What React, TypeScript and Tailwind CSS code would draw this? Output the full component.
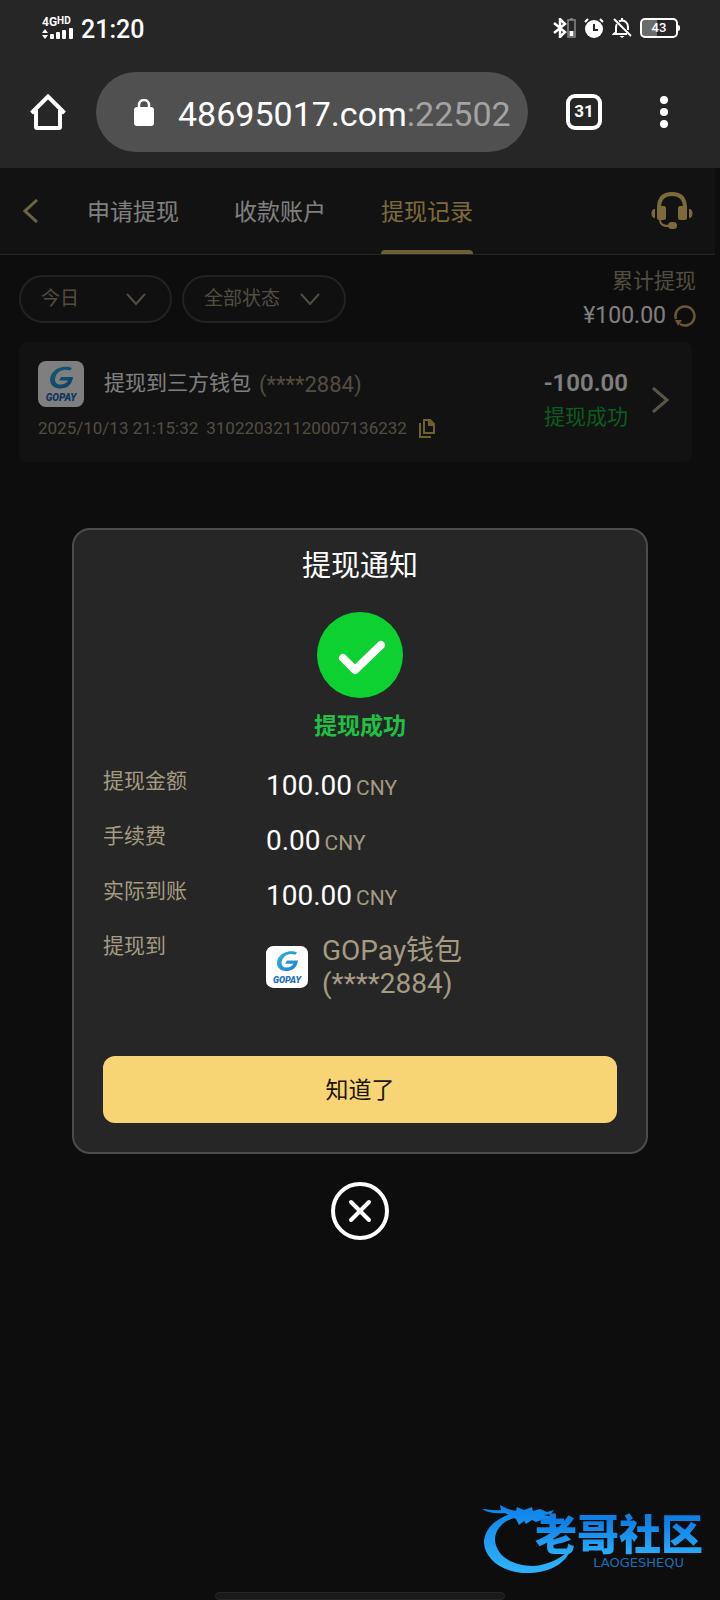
import React, { useState } from 'react';
import clsx from 'clsx';

interface DetailRow {
    label: string;
    amount: string;
    currency: string;
}

const tabs = ['申请提现', '收款账户', '提现记录'];

const detailRows: DetailRow[] = [
    { label: '提现金额', amount: '100.00', currency: 'CNY' },
    { label: '手续费', amount: '0.00', currency: 'CNY' },
    { label: '实际到账', amount: '100.00', currency: 'CNY' },
];

const GoPayLogo = ({ className }: { className?: string }) => (
    <svg viewBox="0 0 46 46" className={className} role="img" aria-label="GOPAY">
        <defs>
            <linearGradient id="gopay" x1="0" y1="0" x2="1" y2="1">
                <stop offset="0" stopColor="#2fb4e6" />
                <stop offset="1" stopColor="#1f7fd0" />
            </linearGradient>
        </defs>
        <rect width="46" height="46" rx="8" fill="#fff" />
        <path
            d="M34 7C28 4 18 6 13.500 13C10 20 13 27 21 27.500C29 28 34 24 35 16H23L21 19.500H30C28.500 22.500 25 24 21.500 23.500C17 23 16 19 18 14.500C20.500 9.500 27 7.500 32 9.500Z"
            fill="url(#gopay)"
        />
        <text
            x="23"
            y="40"
            textAnchor="middle"
            className="fill-[#1f6fc0] font-[Roboto,sans-serif] text-[10px] font-black italic"
        >
            GOPAY
        </text>
    </svg>
);

const StatusBar = () => (
    <div className="flex h-14 items-center justify-between pr-10 pl-[42px] text-white">
        <div className="flex items-center gap-2">
            <div className="flex flex-col gap-px">
                <p className="flex items-start text-[12px] leading-[10px] font-bold">
                    4G<span className="text-[10px] leading-[7px]">HD</span>
                </p>
                <svg width="31" height="12" viewBox="0 0 31 12" fill="currentColor">
                    <path d="M0 5L3 1L6 5ZM0 7L3 11L6 7Z" />
                    <rect x="8" y="6" width="4" height="5" rx="1" />
                    <rect x="14" y="4" width="4" height="7" rx="1" />
                    <rect x="20" y="2" width="4" height="9" rx="1" />
                    <rect x="27" y="0" width="4" height="11" rx="1" />
                </svg>
            </div>
            <time className="pt-[3px] text-[25px] leading-8 font-medium">21:20</time>
        </div>
        <div className="flex items-center gap-2">
            <svg width="23" height="20" viewBox="0 0 23 20" fill="none">
                <path d="M1 5L12 14L7 19V1L12 6L1 15" stroke="#fff" strokeWidth="2.5" />
                <path d="M15 2H22V19H15ZM17 1H20" stroke="#8a8a8a" strokeWidth="1.5" />
                <rect x="16.5" y="13" width="4" height="5" fill="#fff" />
            </svg>
            <svg width="20" height="20" viewBox="0 0 20 20" fill="none">
                <circle cx="10" cy="11" r="9" fill="#fff" />
                <path d="M1 4L4 1M16 1L19 4" stroke="#fff" strokeWidth="2" />
                <path d="M10 6V12H14" stroke="#262626" strokeWidth="2" />
            </svg>
            <svg width="20" height="20" viewBox="0 0 20 20" fill="none" stroke="#fff" strokeWidth="2">
                <path d="M5 6C4.300 7 4 8 4 9.500V14L2 16H15M7 3.500C8 3 9 2.500 10 2.500C13.500 2.500 16 5.500 16 9V12M10 0V3" />
                <path d="M2 1L19 18" />
                <path d="M7.500 18H12.500L10 20Z" fill="#fff" stroke="none" />
            </svg>
            <div className="flex items-center">
                <div className="flex h-5 w-[38px] items-center justify-center rounded-[5px] border-2 border-white bg-linear-to-r from-[#6b6b6b] from-43% to-transparent to-43% text-[13px] font-medium">
                    43
                </div>
                <div className="h-[6px] w-[2px] rounded-r bg-white" />
            </div>
        </div>
    </div>
);

const BrowserBar = () => (
    <div className="flex items-center px-[30px] pt-4 pb-4 text-white">
        <button aria-label="主页">
            <svg width="36" height="36" viewBox="0 0 36 36" fill="none" stroke="currentColor" strokeWidth="4">
                <path d="M1.500 19L18 2.500L34.500 19" />
                <path d="M6 16V33Q6 34 7 34H29Q30 34 30 33V16" />
            </svg>
        </button>
        <div className="mr-[38px] ml-[30px] flex h-20 min-w-0 flex-1 items-center rounded-full bg-[#505050] pl-[38px]">
            <svg width="20" height="27" viewBox="0 0 20 27" className="shrink-0">
                <rect y="8" width="20" height="19" rx="3" fill="#fff" />
                <path d="M5 9V6A5 5 0 0 1 15 6V9" fill="none" stroke="#fff" strokeWidth="2.5" />
            </svg>
            <p className="ml-6 pt-1 text-[34px] leading-10 whitespace-nowrap">
                48695017.com<span className="text-[#a3a3a3]">:22502</span>
            </p>
        </div>
        <button className="flex size-9 items-center justify-center rounded-[9px] border-4 border-white text-[17px] font-bold">
            31
        </button>
        <button aria-label="更多" className="mr-[22px] ml-[58px] flex flex-col gap-1">
            <span className="size-2 rounded-full bg-white" />
            <span className="size-2 rounded-full bg-white" />
            <span className="size-2 rounded-full bg-white" />
        </button>
    </div>
);

const TabBar = () => (
    <nav className="flex h-[87px] items-stretch border-b border-[#4d4d4d] bg-[#252525] pr-[22px] pl-[23px]">
        <button aria-label="返回" className="mr-12">
            <svg width="16" height="24" viewBox="0 0 16 24" fill="none" stroke="#d8c68a" strokeWidth="3">
                <path d="M14 1L2 12L14 23" />
            </svg>
        </button>
        <div className="flex flex-1 gap-[55px]">
            {tabs.map((tab, index) => (
                <button
                    key={tab}
                    className={clsx(
                        'flex flex-col items-center text-[23px] whitespace-nowrap',
                        index === 2 ? 'text-[#f8d574]' : 'text-white'
                    )}
                >
                    <span className="flex flex-1 items-center pt-2">{tab}</span>
                    <span className={clsx('h-1 w-full rounded-t-sm', index === 2 && 'bg-[#d8c068]')} />
                </button>
            ))}
        </div>
        <button aria-label="客服">
            <svg width="42" height="38" viewBox="0 0 42 38" fill="none">
                <path d="M8 16C8 6 13 2 21 2S34 6 34 16" stroke="#f8d574" strokeWidth="4" />
                <rect x="6" y="14" width="9" height="14" rx="2" fill="#f8d574" />
                <rect x="27" y="14" width="9" height="14" rx="2" fill="#f8d574" />
                <path
                    d="M4 17V26C1.500 26 0.500 24 0.500 21.500S1.500 17 4 17ZM38 17V26C40.500 26 41.500 24 41.500 21.500S40.500 17 38 17Z"
                    fill="#f8d574"
                />
                <path d="M9 27C9 32 11 34 18 34" stroke="#f8d574" strokeWidth="2" />
                <rect x="17" y="30" width="9" height="7" rx="3.5" fill="#f8d574" />
            </svg>
        </button>
    </nav>
);

const FilterSelect = ({ label, option, className }: { label: string; option: string; className: string }) => (
    <div className={clsx('relative h-12', className)}>
        <select
            aria-label={label}
            className="h-full w-full appearance-none rounded-full border-2 border-[#444] bg-[#202020] pl-5 text-[19px] text-[#a49b82]"
        >
            <option>{option}</option>
        </select>
        <svg
            width="20"
            height="12"
            viewBox="0 0 20 12"
            fill="none"
            stroke="#a49b82"
            strokeWidth="2"
            className="pointer-events-none absolute top-[18px] right-[26px]"
        >
            <path d="M1 1L10 11L19 1" />
        </svg>
    </div>
);

const RecordCard = () => (
    <article className="mt-[11px] mr-1 flex min-h-[120px] items-start rounded-lg bg-[#242424] pt-[19px] pr-[23px] pl-[19px]">
        <div className="flex-1">
            <div className="flex items-center">
                <GoPayLogo className="size-[46px]" />
                <p className="ml-5 flex items-center gap-2 text-[21px] text-white">
                    提现到三方钱包 <span className="text-[22px] text-[#a49b82]">(****2884)</span>
                </p>
            </div>
            <p className="mt-[9px] flex items-center text-[17px] leading-6 text-[#a49b82]">
                <span>2025/10/13 21:15:32</span>
                <span className="ml-2">310220321120007136232</span>
                <button aria-label="复制" className="ml-3">
                    <svg width="16" height="19" viewBox="0 0 16 19" fill="none" stroke="#e3bf60" strokeWidth="2">
                        <path d="M1 4V18H12" />
                        <path d="M5 1H11L15 5V14H5Z" />
                        <path d="M10 1V6H15" fill="#e3bf60" />
                    </svg>
                </button>
            </p>
        </div>
        <div className="mt-[5px] text-right">
            <p className="text-2xl leading-[34px] font-semibold text-white">-100.00</p>
            <p className="text-[21px] leading-[34px] text-[#18b83c]">提现成功</p>
        </div>
        <button aria-label="查看详情" className="mt-[26px] ml-6">
            <svg width="17" height="26" viewBox="0 0 17 26" fill="none" stroke="#b5ab90" strokeWidth="3">
                <path d="M1 1L15 13L1 25" />
            </svg>
        </button>
    </article>
);

const WithdrawNotice = ({ onClose }: { onClose: () => void }) => (
    <div className="absolute inset-0 flex flex-col items-center justify-center bg-black/50">
        <section
            role="dialog"
            aria-labelledby="notice-title"
            className="flex w-4/5 flex-col rounded-[18px] border-2 border-[#4c4c4c] bg-[#262626] px-[29px] pt-4 pb-[29px]"
        >
            <h2 id="notice-title" className="text-center text-[29px] leading-10 text-white">提现通知</h2>
            <svg width="86" height="86" viewBox="0 0 86 86" className="mt-[26px] self-center">
                <circle cx="43" cy="43" r="43" fill="#0cd130" />
                <path
                    d="M26 46L38 58L64 33"
                    fill="none"
                    stroke="#fff"
                    strokeWidth="8"
                    strokeLinecap="round"
                    strokeLinejoin="round"
                />
            </svg>
            <p className="mt-[13px] text-center text-[23px] leading-8 font-bold text-[#1fc043]">提现成功</p>
            <dl className="mt-[22px] grid grid-cols-[163px_1fr] gap-y-[13px] text-[#a49b82]">
                {detailRows.map((row) => (
                    <React.Fragment key={row.label}>
                        <dt className="text-[21px] leading-8">{row.label}</dt>
                        <dd className="flex h-[42px] items-baseline gap-1 pt-px text-[21px] leading-10">
                            <span className="text-[28px] text-white">{row.amount}</span>
                            <span>{row.currency}</span>
                        </dd>
                    </React.Fragment>
                ))}
                <dt className="text-[21px] leading-8">提现到</dt>
                <dd className="flex items-center gap-[14px] pt-1 text-[28px] leading-[33px]">
                    <GoPayLogo className="size-[42px]" />
                    <p>GOPay钱包<br />(****2884)</p>
                </dd>
            </dl>
            <button onClick={onClose} className="mt-14 h-[67px] rounded-xl bg-[#f8d574] pt-[3px] text-[23px] text-[#1c1405]">
                知道了
            </button>
        </section>
        <button
            onClick={onClose}
            aria-label="关闭"
            className="mt-7 flex size-[58px] items-center justify-center rounded-full border-4 border-white"
        >
            <svg width="24" height="24" viewBox="0 0 24 24" stroke="#fff" strokeWidth="4" strokeLinecap="round">
                <path d="M3 3L21 21M21 3L3 21" />
            </svg>
        </button>
    </div>
);

const CommunityLogo = () => (
    <div className="pointer-events-none absolute right-[17px] bottom-6 h-[78px] w-[223px]">
        <svg width="223" height="78" viewBox="0 0 223 78" className="absolute inset-0" aria-hidden="true">
            <defs>
                <linearGradient id="dragon" gradientUnits="userSpaceOnUse" x1="0" y1="10" x2="0" y2="70">
                    <stop offset="0" stopColor="#0f84e8" />
                    <stop offset="1" stopColor="#2db0fb" />
                </linearGradient>
            </defs>
            <g fill="url(#dragon)">
                <path d="M36 14C14 20 4 32 4 45C5 62 24 76 50 75C73 74 87 63 91 51C80 61 68 67 53 68C31 68 16 57 15 42C15 31 24 21 40 19Z" />
                <path d="M2 11C9 11 14 13 21 12L20 7L28 11L36 13L37 9L44 12L52 9L53 13L60 11L67 14L74 12L71 16L64 17L73 19L71 22L64 21L56 24L52 22L46 26L44 23L39 27L36 21L25 15C16 16 8 15 2 11Z" />
            </g>
        </svg>
        <div className="relative flex flex-col items-end">
            <p className="bg-linear-to-b from-[#0f7fe4] from-40% to-[#2db0fb] bg-clip-text pt-[17px] text-[42px] leading-[42px] font-black text-transparent">
                老哥社区
            </p>
            <p className="mr-[19px] font-['DejaVu_Sans',sans-serif] text-[13px] leading-3 text-[#1a6fb8]">
                LAOGESHEQU
            </p>
        </div>
    </div>
);

const App: React.FC = () => {
    const [open, setOpen] = useState(true);

    return (
        <div className="flex min-h-screen flex-col bg-[#262626] font-[Roboto,'Noto_Sans_CJK_SC',sans-serif]">
            <header>
                <StatusBar />
                <BrowserBar />
            </header>
            <main className="relative flex-1 bg-[#1a1a1a] pr-[5px]">
                <TabBar />
                <div className="px-[19px] pt-[11px]">
                    <div className="flex items-start justify-between">
                        <div className="flex gap-[10px] pt-[9px]">
                            <FilterSelect label="日期" option="今日" className="w-[153px]" />
                            <FilterSelect label="状态" option="全部状态" className="w-[164px]" />
                        </div>
                        <div className="flex flex-col items-end text-[21px] leading-[31px]">
                            <p className="text-[#a49b82]">累计提现</p>
                            <p className="flex items-center gap-2 pt-[3px] text-[23px] text-white">
                                ¥100.00
                                <button aria-label="刷新">
                                    <svg width="22" height="22" viewBox="0 0 22 22" fill="none">
                                        <path d="M6 19A9.500 9.500 0 1 0 2 14" stroke="#d9ad68" strokeWidth="2.5" />
                                        <path d="M1 15L8 15L4 21Z" fill="#d9ad68" />
                                    </svg>
                                </button>
                            </p>
                        </div>
                    </div>
                    <RecordCard />
                </div>
                {open && <WithdrawNotice onClose={() => setOpen(false)} />}
                <CommunityLogo />
                <div className="absolute bottom-0 left-1/2 h-2 w-[290px] -translate-x-1/2 rounded-full border border-[#262626] bg-[#1a1a1a]" />
            </main>
        </div>
    );
};

export default App;
